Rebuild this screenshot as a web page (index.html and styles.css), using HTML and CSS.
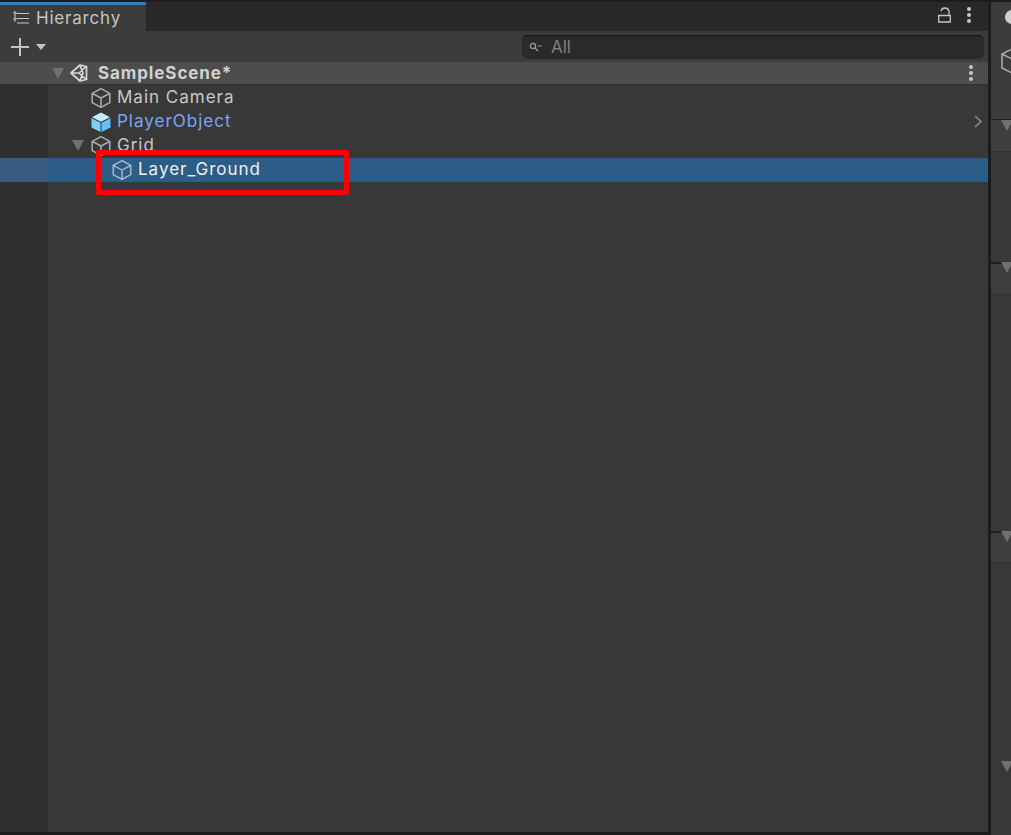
FILE: index.html
```html
<!DOCTYPE html>
<html lang="en">
<head>
<meta charset="utf-8">
<title>Hierarchy</title>
<link rel="stylesheet" href="styles.css">
</head>
<body>
<div class="editor">
  <section class="hierarchy">
    <div class="tabbar">
      <div class="tab">
        <svg class="tab-icon" viewBox="0 0 18 14"><path d="M4 2.500h12M4 7.500h12M4 12h12M2 0v11M0 2h4M0 8h4" fill="none" stroke="#c4c4c4" stroke-width="1.100"/></svg>
        <span>Hierarchy</span>
      </div>
      <div class="tab-actions">
        <svg class="lock" viewBox="0 0 13 16"><path d="M.700 8.500h11.600v6.500H.700zM3 4c1-4 7-4 8 0v4.500" fill="none" stroke="#c4c4c4" stroke-width="1.300"/></svg>
        <span class="kebab"><i></i><i></i><i></i></span>
      </div>
    </div>
    <div class="toolbar">
      <div class="add">
        <svg class="plus" viewBox="0 0 18 18"><path d="M9 0v18M0 9h18" stroke="#c4c4c4" stroke-width="2"/></svg>
        <span class="caret-small"></span>
      </div>
      <div class="search">
        <svg class="glass" viewBox="0 0 14 10"><circle cx="4" cy="4" r="2.600" fill="none" stroke="#9a9a9a" stroke-width="1.400"/><path d="M6 6l3 3M9 4h4" stroke="#9a9a9a" stroke-width="1.200"/></svg>
        <span>All</span>
      </div>
    </div>
    <div class="scene-row">
      <span class="fold"></span>
      <svg class="unity" viewBox="0 0 18 18"><path d="M10 1l6.500 1.500v13L10 17 1 9zM16 2.500L9 9H2M9 9l7 6.500M10 1.500L13 9l-3 7.500" fill="none" stroke="#d6d6d6" stroke-width="1.700" stroke-linejoin="round"/></svg>
      <span class="scene-name">SampleScene*</span>
      <span class="kebab scene-kebab"><i></i><i></i><i></i></span>
    </div>
    <div class="tree">
      <div class="row depth-1">
        <svg class="cube" viewBox="0 0 20 20"><path d="M10 .700l8.800 4.600v9.400L10 19.300l-8.800-4.600V5.300zM1.200 5.300L10 10l8.800-4.700M10 10v9.300" fill="none" stroke="#aeaeae" stroke-width="1.500" stroke-linejoin="round"/></svg>
        <span>Main Camera</span>
      </div>
      <div class="row depth-1 prefab">
        <svg class="cube" viewBox="0 0 20 20"><path d="M10 .500l9 4.700L10 9.700 1 5.200z" fill="#c5ecff"/><path d="M.500 6.200l9 4.500V20l-9-4.500z" fill="#7bd1fb"/><path d="M19.500 6.200l-9 4.500V20l9-4.500z" fill="#64c2f5"/></svg>
        <span>PlayerObject</span>
        <svg class="chevron" viewBox="0 0 9 13"><path d="M1 1l6 5.500-6 5.500" fill="none" stroke="#7d7d7d" stroke-width="1.800"/></svg>
      </div>
      <div class="row depth-1 has-fold">
        <span class="fold"></span>
        <svg class="cube" viewBox="0 0 20 20"><path d="M10 .700l8.800 4.600v9.400L10 19.300l-8.800-4.600V5.300zM1.200 5.300L10 10l8.800-4.700M10 10v9.300" fill="none" stroke="#aeaeae" stroke-width="1.500" stroke-linejoin="round"/></svg>
        <span>Grid</span>
      </div>
      <div class="row depth-2 selected">
        <svg class="cube" viewBox="0 0 20 20"><path d="M10 .700l8.800 4.600v9.400L10 19.300l-8.800-4.600V5.300zM1.200 5.300L10 10l8.800-4.700M10 10v9.300" fill="none" stroke="#b0bcc8" stroke-width="1.400" stroke-linejoin="round"/></svg>
        <span>Layer_Ground</span>
      </div>
      <div class="highlight"></div>
    </div>
  </section>
  <aside class="inspector">
    <div class="inspector-head">
      <span class="inspector-tab-icon"></span>
      <svg class="inspector-cube" viewBox="0 0 20 26"><path d="M12 1l10 5v14l-10 5-10-5V6zM2 6l10 5 10-5" fill="none" stroke="#aeaeae" stroke-width="1.500"/></svg>
    </div>
    <div class="component c1"><span class="fold"></span></div>
    <div class="component c2"><span class="fold"></span></div>
    <div class="component c3"><span class="fold"></span><span class="fold lower"></span></div>
  </aside>
</div>
</body>
</html>
```
FILE: styles.css
```css
* { box-sizing: border-box; }
html, body { margin: 0; height: 100%; }
body {
  background: #1c1c1c;
  font-family: Inter, "Liberation Sans", sans-serif;
  overflow: hidden;
}
.editor {
  display: flex;
  width: 1011px;
  height: 835px;
  gap: 3px;
  padding-top: 2px;
}
.hierarchy {
  width: 988px;
  flex: none;
  height: 830px;
  display: flex;
  flex-direction: column;
  background: linear-gradient(to right, #2f2f2f 48px, #383838 48px);
}
.tabbar {
  height: 29px;
  flex: none;
  display: flex;
  justify-content: space-between;
  background: #282828;
  border-radius: 0 4px 0 0;
}
.tab {
  width: 147px;
  display: flex;
  align-items: center;
  gap: 5px;
  padding: 0 0 1px 13px;
  background: #3c3c3c;
  border-top: 3px solid #3a79bb;
  border-right: 1px solid #232323;
  border-radius: 0 3px 0 0;
  color: #c4c4c4;
  font-size: 17px;
  letter-spacing: .8px;
}
.tab-icon { width: 18px; height: 14px; }
.tab-actions {
  display: flex;
  align-items: center;
  gap: 16px;
  padding: 0 17px 3px 0;
}
.lock { width: 13px; height: 16px; }
.kebab {
  display: flex;
  flex-direction: column;
  gap: 2px;
}
.kebab i {
  width: 4px;
  height: 4px;
  border-radius: 50%;
  background: #c4c4c4;
}
.toolbar {
  height: 31px;
  flex: none;
  display: flex;
  align-items: center;
  justify-content: space-between;
  padding: 0 4px 0 11px;
  background: #3c3c3c;
}
.add { display: flex; align-items: center; gap: 7px; }
.plus { width: 18px; height: 18px; }
.caret-small {
  width: 0;
  height: 0;
  border: 5px solid transparent;
  border-top: 6px solid #c4c4c4;
  border-bottom: 0;
}
.search {
  width: 462px;
  height: 24px;
  display: flex;
  align-items: center;
  gap: 8px;
  padding-left: 7px;
  background: #2a2a2a;
  border-top: 1px solid #151515;
  border-radius: 5px;
  color: #7f7f7f;
  font-size: 17px;
}
.glass { width: 14px; height: 10px; }
.scene-row {
  height: 23px;
  flex: none;
  display: flex;
  align-items: center;
  padding: 0 15px 0 52px;
  background: #4d4d4d;
  border-bottom: 1px solid #303030;
  color: #d2d2d2;
  font-size: 17px;
  font-weight: 700;
  letter-spacing: .9px;
}
.fold {
  width: 0;
  height: 0;
  flex: none;
  border: 6.5px solid transparent;
  border-top: 11px solid #707070;
  border-bottom: 0;
}
.unity { width: 18px; height: 18px; margin-left: 6px; }
.scene-name { margin-left: 10px; }
.scene-kebab { margin-left: auto; }
.tree {
  position: relative;
  flex: 1;
}
.row {
  height: 24px;
  display: flex;
  align-items: center;
  color: #c8c8c8;
  font-size: 17px;
  letter-spacing: 1px;
}
.depth-1 { padding-left: 91px; }
.depth-2 { padding: 0 0 2px 112px; margin-top: 1px; }
.has-fold { padding-left: 72px; }
.has-fold .fold { margin-right: 6.500px; }
.cube { width: 20px; height: 20px; flex: none; margin: 2px 6px 0 0; }
.has-fold span:last-child { margin-left: .5px; }
.prefab { color: #78a8f2; position: relative; }
.chevron {
  position: absolute;
  left: 974px;
  top: 6px;
  width: 9px;
  height: 13px;
}
.selected {
  color: #f0f0f0;
  background: linear-gradient(to right, #3c5b84 48px, #2c5d87 48px);
}
.highlight {
  position: absolute;
  left: 96px;
  top: 65px;
  width: 253px;
  height: 45px;
  border: 5px solid #fe0000;
  border-radius: 2px;
}
.inspector {
  flex: 1;
  display: flex;
  flex-direction: column;
  height: 833px;
  background: #383838;
}
.inspector-head {
  height: 118px;
  flex: none;
  background: #3c3c3c;
  border-bottom: 1px solid #1f1f1f;
  position: relative;
}
.inspector-tab-icon {
  position: absolute;
  left: 14px;
  top: 8px;
  width: 14px;
  height: 14px;
  border-radius: 50%;
  background: #d0d0d0;
}
.inspector-cube { position: absolute; left: 9px; top: 46px; width: 20px; height: 26px; }
.component {
  position: relative;
  flex: none;
  background: linear-gradient(to bottom, #3e3e3e 30px, #303030 30px, #303030 31px, #383838 31px);
  border-bottom: 2px solid #1f1f1f;
  padding: 9px 0 0 10px;
}
.c1 {
  height: 144px;
  padding-top: 11px;
  background: linear-gradient(to bottom, #3e3e3e 31px, #303030 31px, #303030 32px, #383838 32px);
}
.c2 { height: 269px; }
.c3 {
  flex: 1;
  border-bottom: 0;
  background: linear-gradient(to bottom, #3e3e3e 29px, #303030 29px, #303030 30px, #383838 30px);
}
.lower { position: absolute; left: 10px; top: 228px; }
```
